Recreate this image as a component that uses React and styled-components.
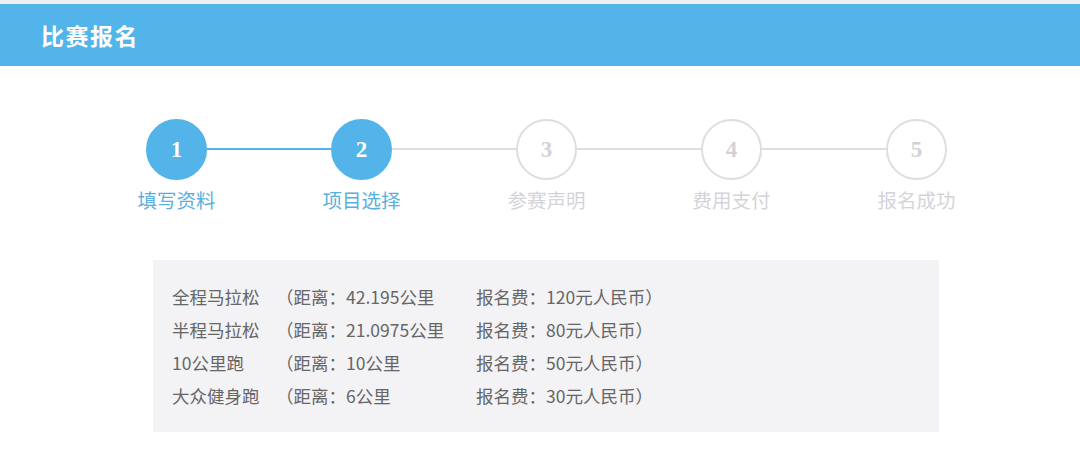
import React from "react";
import styled, { createGlobalStyle } from "styled-components";

const GlobalStyle = createGlobalStyle`
  html, body {
    margin: 0;
    padding: 0;
    background: #ffffff;
  }
  body {
    font-family: "Noto Sans CJK SC", "Noto Sans", sans-serif;
  }
`;

const steps = [
  { num: 1, label: "填写资料" },
  { num: 2, label: "项目选择" },
  { num: 3, label: "参赛声明" },
  { num: 4, label: "费用支付" },
  { num: 5, label: "报名成功" },
];
const current = 2;

const events = [
  { name: "全程马拉松", dist: "（距离：42.195公里", fee: "报名费：120元人民币）" },
  { name: "半程马拉松", dist: "（距离：21.0975公里", fee: "报名费：80元人民币）" },
  { name: "10公里跑", dist: "（距离：10公里", fee: "报名费：50元人民币）" },
  { name: "大众健身跑", dist: "（距离：6公里", fee: "报名费：30元人民币）" },
];

export default function App() {
  return (
    <Page>
      <GlobalStyle />
      <TopStrip />
      <Header>
        <h1>比赛报名</h1>
      </Header>
      <Steps>
        {steps.map((s, i) => (
          <React.Fragment key={s.num}>
            {i > 0 && <Connector $active={s.num <= current} />}
            <Step>
              <Circle $active={s.num <= current}>{s.num}</Circle>
              <StepLabel $active={s.num <= current}>{s.label}</StepLabel>
            </Step>
          </React.Fragment>
        ))}
      </Steps>
      <EventBox>
        {events.map((e) => (
          <EventRow key={e.name}>
            <span>{e.name}</span>
            <span>{e.dist}</span>
            <span>{e.fee}</span>
          </EventRow>
        ))}
      </EventBox>
    </Page>
  );
}

const Page = styled.div`
  width: 1080px;
  height: 472px;
  overflow: hidden;
  background: #fff;
`;

const TopStrip = styled.div`
  height: 4px;
  background: #eceff1;
`;

const Header = styled.header`
  height: 62px;
  background: #52b4e8;
  display: flex;
  align-items: center;
  padding-left: 41px;
  h1 {
    margin: 0;
    color: #fff;
    font-size: 23px;
    font-weight: 700;
    letter-spacing: 1.5px;
  }
`;

const Steps = styled.div`
  display: flex;
  align-items: flex-start;
  margin: 53px 0 0 146px;
  height: 141px;
`;

const Step = styled.div`
  width: 61px;
  display: flex;
  flex-direction: column;
  align-items: center;
`;

const Circle = styled.div`
  width: 61px;
  height: 61px;
  box-sizing: border-box;
  border-radius: 50%;
  display: flex;
  align-items: center;
  justify-content: center;
  font-family: "Liberation Serif", "DejaVu Serif", serif;
  font-weight: 700;
  font-size: 23px;
  background: ${(p) => (p.$active ? "#52b4e8" : "#fff")};
  border: 2px solid ${(p) => (p.$active ? "#52b4e8" : "#dedde2")};
  color: ${(p) => (p.$active ? "#fff" : "#d2d2d6")};
`;

const Connector = styled.div`
  flex: 0 0 124px;
  height: 2px;
  margin-top: 29px;
  background: ${(p) => (p.$active ? "#52b4e8" : "#dedde2")};
`;

const StepLabel = styled.div`
  margin-top: 8px;
  white-space: nowrap;
  font-size: 19.5px;
  line-height: 24px;
  color: ${(p) => (p.$active ? "#5ab0dc" : "#d4d4d8")};
`;

const EventBox = styled.div`
  margin-left: 153px;
  width: 786px;
  box-sizing: border-box;
  padding: 20px 19px;
  background: #f3f2f5;
`;

const EventRow = styled.div`
  display: grid;
  grid-template-columns: 104px 200px auto;
  height: 33px;
  align-items: center;
  font-size: 17.5px;
  color: #666;
  white-space: nowrap;
`;
